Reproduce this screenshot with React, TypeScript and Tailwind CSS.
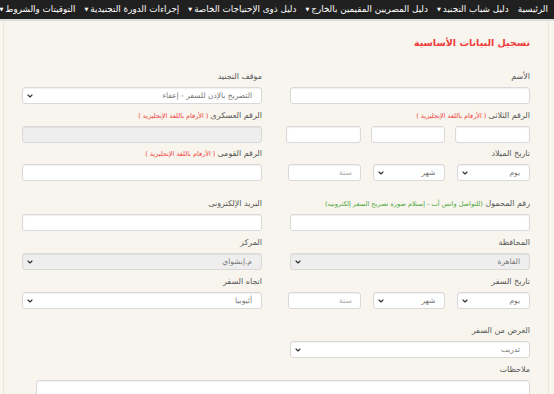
import { ChevronDown } from "lucide-react";

const FONT = { fontFamily: '"DejaVu Sans", "Noto Sans", sans-serif' };

const NAV = [
  { label: "الرئيسية", caret: false },
  { label: "دليل شباب التجنيد", caret: true },
  { label: "دليل المصريين المقيمين بالخارج", caret: true },
  { label: "دليل ذوى الإحتياجات الخاصة", caret: true },
  { label: "إجراءات الدورة التجنيدية", caret: true },
  { label: "التوقيتات والشروط", caret: true },
];

function Label({ children }: { children: React.ReactNode }) {
  return (
    <div className="mb-[4px] h-[12px] whitespace-nowrap text-[8px] leading-[12px] text-[#555]">{children}</div>
  );
}

function Red() {
  return <span className="text-[6.5px] text-[#f23c3c]"> ( الأرقام باللغة الإنجليزية )</span>;
}

function Input({ placeholder, disabled }: { placeholder?: string; disabled?: boolean }) {
  return (
    <div
      className={`flex h-[17px] items-center rounded-[3px] border border-[#d9d9d9] pr-[8px] text-[7.5px] text-[#aaa] shadow-[inset_0_1px_1px_rgba(0,0,0,0.06)] ${
        disabled ? "bg-[#eeeeee]" : "bg-white"
      }`}
    >
      {placeholder}
    </div>
  );
}

function Select({ value, disabled }: { value: string; disabled?: boolean }) {
  return (
    <div
      className={`flex h-[17px] items-center justify-between rounded-[3px] border border-[#d9d9d9] pr-[9px] pl-[3px] text-[7.5px] text-[#777] shadow-[inset_0_1px_1px_rgba(0,0,0,0.06)] ${
        disabled ? "bg-[#eeeeee]" : "bg-white"
      }`}
    >
      <span>{value}</span>
      <ChevronDown size={8} strokeWidth={3.5} className="text-[#333]" />
    </div>
  );
}

function DateRow() {
  return (
    <div className="-ml-[2px] grid grid-cols-3 gap-[12px]">
      <Select value="يوم" />
      <Select value="شهر" />
      <Input placeholder="سنة" />
    </div>
  );
}

export default function App() {
  return (
    <div dir="rtl" className="h-[394px] w-[554px] overflow-hidden bg-[#f8f5ee]" style={FONT}>
      {/* Navbar */}
      <div className="flex h-[21px] items-start overflow-hidden border-b-[2px] border-[#dcdcdc] bg-[#202020]">
        <div className="flex h-[19px] items-center gap-[9px] whitespace-nowrap pr-[6px] text-[8.8px] text-white">
          {NAV.map((n) => (
            <span key={n.label} className="flex items-center">
              {n.label}
              {n.caret && <span className="mr-[2px] text-[5px]">▼</span>}
            </span>
          ))}
        </div>
      </div>

      {/* Panel */}
      <div className="mr-[5px] ml-[3px] h-[373px] border-x border-[#ebe7dc] px-[18px]">
        <div className="pt-[15px] text-[9.5px] leading-[14px] font-bold text-[#ee3b3b]">تسجيل البيانات الأساسية</div>

        <div className="mt-[21px] grid grid-cols-2 gap-x-[28px]">
          {/* Row 1 */}
          <div>
            <Label>الأسم</Label>
            <Input />
          </div>
          <div>
            <Label>موقف التجنيد</Label>
            <Select value="التصريح بالإذن للسفر - إعفاء" />
          </div>

          {/* Row 2 */}
          <div className="mt-[6px]">
            <Label>
              الرقم الثلاثى
              <Red />
            </Label>
            <div className="-ml-[4px] grid grid-cols-3 gap-[10px]">
              <Input />
              <Input />
              <Input />
            </div>
          </div>
          <div className="mt-[6px]">
            <Label>
              الرقم العسكرى
              <Red />
            </Label>
            <Input disabled />
          </div>

          {/* Row 3 */}
          <div className="mt-[5px]">
            <Label>تاريخ الميلاد</Label>
            <DateRow />
          </div>
          <div className="mt-[5px]">
            <Label>
              الرقم القومى
              <Red />
            </Label>
            <Input placeholder="" />
          </div>

          {/* Row 4 */}
          <div className="mt-[17px]">
            <Label>
              رقم المحمول{" "}
              <span className="text-[6.5px] text-[#4aa63a]">(للتواصل واتس أب - إستلام صورة تصريح السفر إلكترونيه)</span>
            </Label>
            <Input />
          </div>
          <div className="mt-[17px]">
            <Label>البريد الإلكترونى</Label>
            <Input />
          </div>

          {/* Row 5 */}
          <div className="mt-[6px]">
            <Label>المحافظة</Label>
            <Select value="القاهرة" disabled />
          </div>
          <div className="mt-[6px]">
            <Label>المركز</Label>
            <Select value="م.إبشواي" disabled />
          </div>

          {/* Row 6 */}
          <div className="mt-[6px]">
            <Label>تاريخ السفر</Label>
            <DateRow />
          </div>
          <div className="mt-[6px]">
            <Label>اتجاه السفر</Label>
            <Select value="أثيوبيا" />
          </div>

          {/* Row 7 */}
          <div className="mt-[16px]">
            <Label>الغرض من السفر</Label>
            <Select value="تدريب" />
          </div>
          <div />
        </div>

        {/* Notes */}
        <div className="mt-[6px] ml-[14px]">
          <Label>ملاحظات</Label>
          <div className="h-[40px] rounded-[3px] border border-[#d9d9d9] bg-white shadow-[inset_0_1px_1px_rgba(0,0,0,0.06)]" />
        </div>
      </div>
    </div>
  );
}
